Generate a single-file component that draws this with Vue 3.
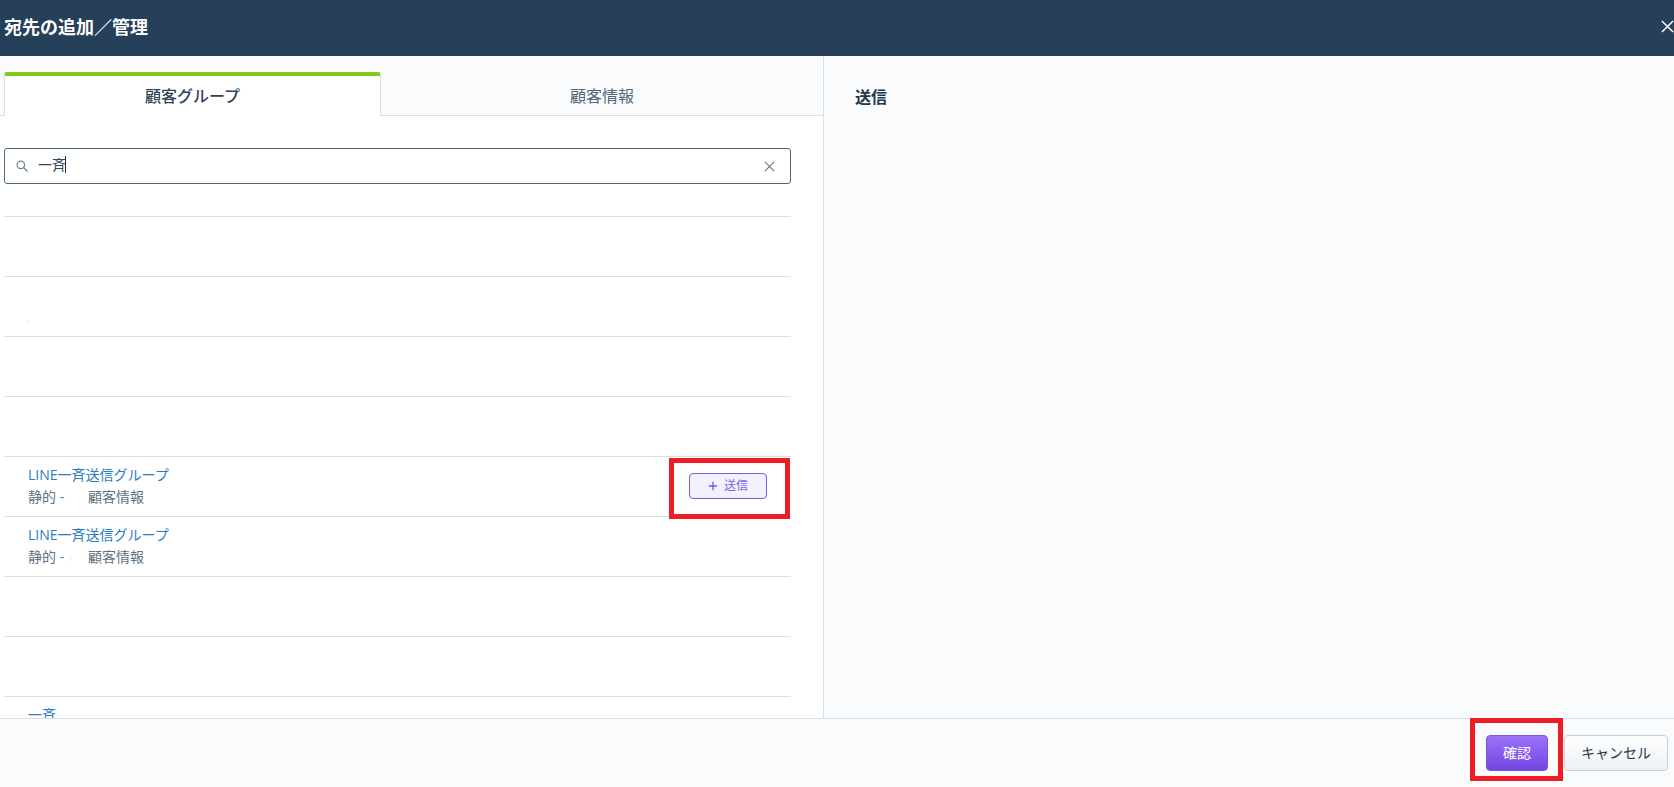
<script setup>
const rows = [
  { key: 'a', spacer: true },
  { key: 'b' },
  { key: 'c', dot: true },
  { key: 'd' },
  { key: 'e' },
  { key: 'f', title: 'LINE一斉送信グループ', action: true },
  { key: 'g', title: 'LINE一斉送信グループ', faint: true },
  { key: 'h' },
  { key: 'i' },
  { key: 'j', title: '一斉', last: true }
]
</script>

<template>
  <div class="modal">
    <header class="head">
      <h1 class="head-title">宛先の追加／管理</h1>
      <svg class="close" viewBox="0 0 14 14" aria-hidden="true">
        <path d="M1 1 13 13M13 1 1 13" />
      </svg>
    </header>

    <div class="body">
      <section class="left">
        <div class="tabs">
          <div class="tab active">顧客グループ</div>
          <div class="tab">顧客情報</div>
        </div>

        <div class="search-wrap">
          <div class="search">
            <svg class="s-icon" viewBox="0 0 14 14" aria-hidden="true">
              <circle cx="5.6" cy="5.6" r="4.4" />
              <path d="M8.8 8.8 13.4 13.4" />
            </svg>
            <span class="s-text">一斉</span>
            <span class="caret"></span>
            <svg class="s-clear" viewBox="0 0 12 12" aria-hidden="true">
              <path d="M1 1 11 11M11 1 1 11" />
            </svg>
          </div>
        </div>

        <div class="list">
          <div
            v-for="row in rows"
            :key="row.key"
            class="row"
            :class="{ spacer: row.spacer }"
          >
            <div v-if="row.title" class="row-text">
              <div class="row-title">{{ row.title }}</div>
              <div v-if="!row.last" class="row-sub">
                <span class="sub-a">静的 -<i v-if="row.faint" class="faint"></i></span><span>顧客情報</span>
              </div>
            </div>
            <span v-if="row.dot" class="dot"></span>
            <div v-if="row.action" class="add-wrap">
              <button class="add" type="button">
                <svg class="plus" viewBox="0 0 12 12" aria-hidden="true">
                  <path d="M6 1V11M1 6H11" />
                </svg>
                <span class="add-label">送信</span>
              </button>
              <span class="mark mark-add"></span>
            </div>
          </div>
        </div>
      </section>

      <aside class="right">
        <h2 class="right-title">送信</h2>
      </aside>
    </div>

    <footer class="foot">
      <div class="ok-wrap">
        <button class="ok" type="button">確認</button>
        <span class="mark mark-ok"></span>
      </div>
      <button class="cancel" type="button">キャンセル</button>
    </footer>
  </div>
</template>

<style scoped>
.modal {
  width: 1674px;
  height: 787px;
  display: flex;
  flex-direction: column;
  overflow: hidden;
  background: #fff;
  color: #33475b;
  font-family: "Open Sans", "Noto Sans CJK JP", sans-serif;
}
.head {
  height: 56px;
  flex: none;
  box-sizing: border-box;
  display: flex;
  align-items: center;
  justify-content: space-between;
  padding: 0 0 3px 4px;
  background: #254058;
}
.head-title {
  margin: 0;
  font-size: 18px;
  line-height: 24px;
  font-weight: 700;
  color: #fff;
}
.close {
  width: 13px;
  height: 13px;
  fill: none;
  stroke: #fff;
  stroke-width: 1.6;
}
.body {
  flex: 1;
  min-height: 0;
  display: flex;
}
.left {
  width: 823px;
  flex: none;
  display: flex;
  flex-direction: column;
  background: #fff;
}
.tabs {
  height: 60px;
  flex: none;
  padding: 16px 0 0 4px;
  box-sizing: border-box;
  display: flex;
  background: #fafbfd;
  border-bottom: 1px solid #d6e0e8;
}
.tab {
  flex: 1;
  height: 43px;
  display: flex;
  align-items: center;
  justify-content: center;
  font-size: 16px;
  color: #51667a;
  padding-top: 2px;
  box-sizing: border-box;
}
.tab.active {
  flex: none;
  width: 377px;
  height: 44px;
  background: #fff;
  color: #2f4358;
  font-weight: 500;
  border: 1px solid #d6e0e8;
  border-top: 4px solid #84c81c;
  border-bottom: 0;
  border-radius: 3px 3px 0 0;
  padding-top: 0;
  padding-bottom: 2px;
}
.search-wrap {
  flex: none;
  padding: 32px 32px 0 4px;
}
.search {
  height: 36px;
  box-sizing: border-box;
  display: flex;
  align-items: center;
  padding: 0 15px 0 11px;
  border: 1px solid #4c6b82;
  border-radius: 3px;
}
.s-icon {
  width: 12px;
  height: 12px;
  flex: none;
  margin-right: 10px;
  fill: none;
  stroke: #6b8496;
  stroke-width: 1.4;
}
.s-text {
  font-size: 14px;
  line-height: 20px;
  color: #33475b;
  margin-bottom: 3px;
}
.caret {
  width: 1px;
  height: 17px;
  margin-left: -1px;
  margin-bottom: 3px;
  background: #16324a;
}
.s-clear {
  width: 11px;
  height: 11px;
  margin-left: auto;
  fill: none;
  stroke: #5f7a90;
  stroke-width: 1.3;
}
.list {
  flex: 1;
  min-height: 0;
  overflow: hidden;
  padding: 0 32px 0 4px;
}
.row {
  height: 60px;
  box-sizing: border-box;
  display: flex;
  align-items: center;
  justify-content: space-between;
  border-bottom: 1px solid #d6e0e8;
  padding-left: 24px;
  position: relative;
}
.row.spacer {
  height: 33px;
}
.row-text {
  align-self: flex-start;
  padding-top: 7px;
}
.row-title {
  font-size: 14px;
  line-height: 22px;
  color: #2c7cc4;
}
.row-sub {
  font-size: 14px;
  line-height: 21px;
  color: #5d7284;
  display: flex;
}
.sub-a {
  width: 60px;
  position: relative;
}
.faint {
  position: absolute;
  left: 42px;
  top: 9px;
  width: 1px;
  height: 6px;
  background: #e4e9ed;
}
.dot {
  width: 1px;
  height: 2px;
  margin-top: 31px;
  background: #d7dee4;
}
.add-wrap {
  position: relative;
  margin-right: 24px;
  margin-bottom: 1px;
  display: flex;
}
.add {
  width: 78px;
  height: 26px;
  box-sizing: border-box;
  padding: 0;
  display: flex;
  align-items: center;
  justify-content: center;
  gap: 6px;
  font: inherit;
  font-size: 12px;
  color: #7f62e6;
  background: #f3f0ff;
  border: 1px solid #7a59e2;
  border-radius: 4px;
}
.add-label {
  margin-bottom: 2px;
}
.plus {
  width: 10px;
  height: 10px;
  fill: none;
  stroke: #7a59e2;
  stroke-width: 1.6;
}
.mark {
  position: absolute;
  box-sizing: border-box;
  border: 5px solid #ee1c25;
  pointer-events: none;
}
.mark-add {
  left: -20px;
  right: -23px;
  top: -15px;
  bottom: -20px;
}
.right {
  flex: 1;
  background: #fafbfd;
  border-left: 1px solid #d6e0e8;
  padding: 30px 0 0 31px;
}
.right-title {
  margin: 0;
  font-size: 16px;
  line-height: 22px;
  font-weight: 700;
  color: #22384c;
}
.foot {
  height: 69px;
  flex: none;
  box-sizing: border-box;
  display: flex;
  align-items: flex-start;
  justify-content: flex-end;
  gap: 16px;
  padding: 16px 6px 0 0;
  background: #fafbfd;
  border-top: 1px solid #d6e0e8;
}
.ok-wrap {
  position: relative;
  display: flex;
}
.ok,
.cancel {
  height: 36px;
  box-sizing: border-box;
  padding: 0 0 2px;
  font: inherit;
  font-size: 14px;
  border-radius: 4px;
}
.ok {
  width: 62px;
  color: #fff;
  background: linear-gradient(#9a72f8, #7346e2);
  border: 1px solid #7a52e4;
}
.cancel {
  width: 104px;
  color: #22384c;
  background: linear-gradient(#fdfefe, #edf2f5);
  border: 1px solid #c6d2db;
}
.mark-ok {
  left: -16px;
  right: -15px;
  top: -17px;
  bottom: -10px;
}
</style>

<style>
html, body { margin: 0; padding: 0; overflow: hidden; }
</style>
